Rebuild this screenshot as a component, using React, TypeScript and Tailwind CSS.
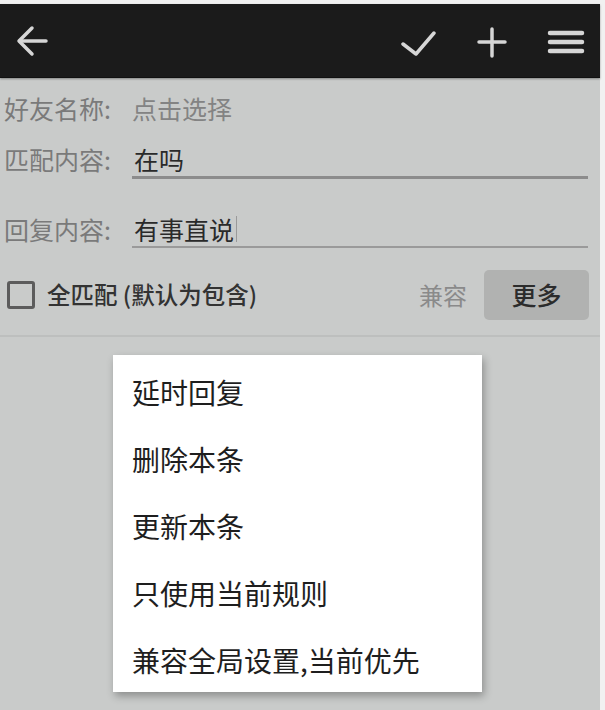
import React from "react";

const font = { fontFamily: '"Noto Sans CJK SC", "Noto Sans", sans-serif' };

export default function App() {
  const items = ["延时回复", "删除本条", "更新本条", "只使用当前规则", "兼容全局设置,当前优先"];
  return (
    <div className="relative w-[605px] h-[710px] bg-[#f1f1f1] pt-[4px] pr-[5px] overflow-hidden" style={font}>
      <div className="w-[600px] h-[706px] bg-[#c9cbca] flex flex-col">
        {/* toolbar */}
        <div className="h-[74px] bg-[#1b1b1b] flex items-center border-b border-[#111] shadow-[0_1px_2px_rgba(0,0,0,0.35)]">
          <svg className="ml-[15px]" width="34" height="34" viewBox="0 0 34 34" fill="none" stroke="#d6d6d6" strokeWidth="3.5" strokeLinecap="round" strokeLinejoin="round">
            <path d="M5 17H31" />
            <path d="M17 4L4 17L17 30" />
          </svg>
          <div className="flex-1" />
          <svg width="36" height="36" viewBox="0 0 36 36" fill="none" stroke="#d6d6d6" strokeWidth="3.5" strokeLinecap="round" strokeLinejoin="round">
            <path d="M3 21L16 31L34 10" />
          </svg>
          <svg className="ml-[38px]" width="36" height="36" viewBox="0 0 36 36" fill="none" stroke="#d6d6d6" strokeWidth="3.5" strokeLinecap="round">
            <path d="M18 6V33" />
            <path d="M5 19H31" />
          </svg>
          <svg className="ml-[37px] mr-[15px]" width="38" height="36" viewBox="0 0 38 36" fill="none" stroke="#d6d6d6" strokeWidth="4.5" strokeLinecap="round">
            <path d="M3 10H35" />
            <path d="M3 19H35" />
            <path d="M3 28H35" />
          </svg>
        </div>

        {/* row 1 */}
        <div className="h-[60px] flex items-center text-[25px] leading-[34px]">
          <div className="w-[132px] pl-[4px] text-[#7a7a7a]">好友名称:</div>
          <div className="text-[#838383]">点击选择</div>
        </div>

        {/* row 2 */}
        <div className="mt-[4px] flex text-[25px] leading-[34px]">
          <div className="w-[132px] pl-[4px] text-[#7a7a7a]">匹配内容:</div>
          <div className="flex-1 mr-[12px] pl-[2px] border-b-[3px] border-[#8c8c8c] text-[#2a2a2a] h-[37px]">在吗</div>
        </div>

        {/* row 3 */}
        <div className="mt-[33px] flex text-[25px] leading-[34px]">
          <div className="w-[132px] pl-[4px] text-[#7a7a7a]">回复内容:</div>
          <div className="flex-1 mr-[12px] pl-[2px] border-b-[2px] border-[#9a9a9a] text-[#2a2a2a] h-[36px] flex items-start">
            <span>有事直说</span>
            <span className="ml-[2px] mt-[4px] w-[1px] h-[26px] bg-[#9a9a9a]" />
          </div>
        </div>

        {/* checkbox row */}
        <div className="mt-[22px] h-[50px] flex items-center">
          <div className="ml-[7px] w-[28px] h-[28px] border-[3px] border-[#5c5c5c] rounded-[3px]" />
          <div className="ml-[12px] text-[23.5px] font-medium text-[#333]">全匹配 (默认为包含)</div>
          <div className="flex-1" />
          <div className="text-[24px] text-[#8a8a8a]">兼容</div>
          <div className="ml-[17px] mr-[11px] w-[105px] h-[50px] rounded-[5px] bg-[#b1b2b1] flex items-center justify-center text-[25px] font-medium text-[#2c2c2c]">
            更多
          </div>
        </div>

        <div className="mt-[15px] h-[2px] bg-[#bdbfbe]" />
      </div>

      {/* popup menu */}
      <div className="absolute left-[113px] top-[355px] w-[369px] h-[337px] bg-white pt-[3px] shadow-[2px_4px_8px_rgba(0,0,0,0.3)]">
        {items.map((t) => (
          <div key={t} className="h-[67px] flex items-center pl-[19px] text-[28px] text-[#1e1e1e]">
            {t}
          </div>
        ))}
      </div>
    </div>
  );
}
